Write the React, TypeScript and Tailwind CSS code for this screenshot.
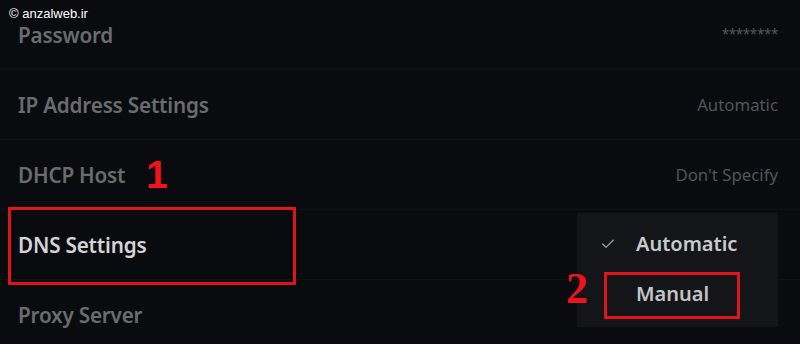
import React from 'react';
import { Check } from 'lucide-react';

interface Row {
  label: string;
  value?: string;
  active?: boolean;
  masked?: boolean;
}

const rows: Row[] = [
  { label: 'Password', value: '********', masked: true },
  { label: 'IP Address Settings', value: 'Automatic' },
  { label: 'DHCP Host', value: "Don't Specify" },
  { label: 'DNS Settings', active: true },
  { label: 'Proxy Server' },
];

export default function App() {
  return (
    <div
      className="relative w-[800px] h-[344px] overflow-hidden bg-[#0a0b0f]"
      style={{ fontFamily: '"Noto Sans", "Open Sans", sans-serif' }}
    >
      {/* settings list */}
      <div className="flex flex-col">
        {rows.map((row) => (
          <div
            key={row.label}
            className="h-[70px] flex items-center justify-between pl-[18px] pr-[22px] border-b border-[#111216]"
          >
            <span
              className={`text-[20.7px] leading-[24px] font-semibold tracking-[-0.2px] ${
                row.active ? 'text-[#d4d4d6]' : 'text-[#6a6b6e]'
              }`}
            >
              {row.label}
            </span>
            {row.value && (
              <span
                className={
                  row.masked
                    ? 'text-[13.5px] text-[#56575a] tracking-[-0.4px]'
                    : 'text-[16.8px] text-[#535457]'
                }
              >
                {row.value}
              </span>
            )}
          </div>
        ))}
      </div>

      {/* dropdown */}
      <div className="absolute left-[577px] top-[213px] w-[201px] h-[114px] bg-[#141519] flex flex-col pt-[13px]">
        <div className="h-[36px] flex items-center">
          <Check className="ml-[23px] w-[16px] h-[16px] text-[#a9aaad]" strokeWidth={1.6} />
          <span className="ml-[20px] text-[20px] font-semibold text-[#c9cacc]">Automatic</span>
        </div>
        <div className="h-[66px] flex items-center">
          <span className="ml-[59px] text-[20px] font-semibold text-[#c4c5c7]">Manual</span>
        </div>
      </div>

      {/* annotations */}
      <div className="absolute left-[8px] top-[207px] w-[288px] h-[78px] border-[3px] border-[#e0151b]" />
      <div className="absolute left-[604px] top-[272px] w-[136px] h-[47px] border-[3px] border-[#e0151b]" />
      <span
        className="absolute left-[146px] top-[154px] text-[39px] leading-[42px] font-bold text-[#f01418]"
        style={{ fontFamily: '"Liberation Sans", Arial, sans-serif' }}
      >
        1
      </span>
      <span
        className="absolute left-[566px] top-[266px] text-[44px] leading-[46px] font-bold text-[#f01418]"
        style={{ fontFamily: '"Liberation Serif", "Times New Roman", serif' }}
      >
        2
      </span>

      {/* watermark */}
      <span
        className="absolute left-[9px] top-[7px] text-[13px] leading-[14px] text-white"
        style={{ fontFamily: '"Liberation Sans", Arial, sans-serif' }}
      >
        © anzalweb.ir
      </span>
    </div>
  );
}
